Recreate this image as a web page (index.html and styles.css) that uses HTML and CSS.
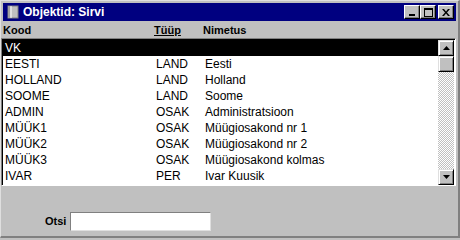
FILE: index.html
```html
<!DOCTYPE html>
<html>
<head>
<meta charset="utf-8">
<link rel="stylesheet" href="styles.css">
</head>
<body>
<div class="window">
  <div class="titlebar">
    <span class="ticon">
      <svg width="14" height="14" viewBox="0 0 14 14"><rect x="2" y="1" width="10" height="12" fill="#c0c0c0" stroke="#808080"/><rect x="2" y="1" width="2" height="12" fill="#a0a0a0"/><line x1="5" y1="1" x2="5" y2="13" stroke="#fff"/></svg>
    </span>
    <span class="ttext">Objektid: Sirvi</span>
    <span class="tbtns">
      <span class="tbtn"><svg width="8" height="7" viewBox="0 0 8 7"><rect x="1" y="5" width="6" height="2" fill="#000"/></svg></span>
      <span class="tbtn"><svg width="9" height="9" viewBox="0 0 9 9"><rect x="0.5" y="0.5" width="8" height="8" fill="none" stroke="#000"/><rect x="0" y="0" width="9" height="2" fill="#000"/></svg></span>
      <span class="tbtn close"><svg width="8" height="7" viewBox="0 0 8 7"><path d="M0 0h2l2 2.5 2-2.5h2l-3 3.5 3 3.5h-2l-2-2.5-2 2.5h-2l3-3.5z" fill="#000"/></svg></span>
    </span>
  </div>
  <div class="header">
    <span class="c1">Kood</span>
    <span class="c2"><u>Tüüp</u></span>
    <span class="c3">Nimetus</span>
  </div>
  <div class="list">
    <div class="rows">
      <div class="row sel"><span class="c1">VK</span><span class="c2"></span><span class="c3"></span></div>
      <div class="row"><span class="c1">EESTI</span><span class="c2">LAND</span><span class="c3">Eesti</span></div>
      <div class="row"><span class="c1">HOLLAND</span><span class="c2">LAND</span><span class="c3">Holland</span></div>
      <div class="row"><span class="c1">SOOME</span><span class="c2">LAND</span><span class="c3">Soome</span></div>
      <div class="row"><span class="c1">ADMIN</span><span class="c2">OSAK</span><span class="c3">Administratsioon</span></div>
      <div class="row"><span class="c1">MÜÜK1</span><span class="c2">OSAK</span><span class="c3">Müügiosakond nr 1</span></div>
      <div class="row"><span class="c1">MÜÜK2</span><span class="c2">OSAK</span><span class="c3">Müügiosakond nr 2</span></div>
      <div class="row"><span class="c1">MÜÜK3</span><span class="c2">OSAK</span><span class="c3">Müügiosakond kolmas</span></div>
      <div class="row"><span class="c1">IVAR</span><span class="c2">PER</span><span class="c3">Ivar Kuusik</span></div>
    </div>
    <div class="scrollbar">
      <div class="sbtn"><svg width="7" height="4" viewBox="0 0 7 4"><path d="M3.5 0L7 4H0z" fill="#000"/></svg></div>
      <div class="thumb"></div>
      <div class="track"></div>
      <div class="sbtn"><svg width="7" height="4" viewBox="0 0 7 4"><path d="M0 0h7L3.5 4z" fill="#000"/></svg></div>
    </div>
  </div>
  <div class="search">
    <label class="slabel">Otsi</label>
    <div class="sinput"></div>
  </div>
</div>
</body>
</html>
```
FILE: styles.css
```css
* { box-sizing: border-box; }
html, body { margin: 0; padding: 0; background: #c0c0c0; }
body { font-family: "Liberation Sans", Arial, sans-serif; font-size: 11px; }
.window {
  width: 460px; height: 238px;
  background: #c0c0c0;
  border-left: 1px solid #dfdfdf;
  border-top: 1px solid #dfdfdf;
  border-right: 2px solid #808080;
  border-bottom: 2px solid #808080;
  display: flex; flex-direction: column;
  overflow: hidden;
}
.titlebar {
  height: 18px; margin: 2px 2px 0 2px;
  background: #000080; color: #fff;
  display: flex; align-items: center;
  padding: 0 2px 0 2px;
}
.ticon { width: 16px; height: 16px; display: flex; align-items: center; justify-content: center; margin-right: 2px; }
.ttext { font-weight: bold; font-size: 12px; flex: 1; }
.tbtns { display: flex; align-items: center; }
.tbtn {
  width: 16px; height: 14px;
  background: #c0c0c0;
  border-top: 1px solid #fff; border-left: 1px solid #fff;
  border-right: 1px solid #000; border-bottom: 1px solid #000;
  box-shadow: inset -1px -1px 0 #808080;
  display: flex; align-items: center; justify-content: center;
}
.tbtn.close { margin-left: 2px; }
.header {
  height: 17px; display: flex; align-items: center;
  font-weight: bold; padding-left: 2px;
}
.c1 { width: 151px; }
.c2 { width: 49px; }
.c3 { flex: 1; }
.list {
  margin-right: 2px;
  height: 148px;
  display: flex;
  border-top: 1px solid #808080; border-left: 1px solid #808080;
  border-right: 1px solid #fff; border-bottom: 1px solid #fff;
  box-shadow: inset 1px 1px 0 #000;
  background: #fff;
  padding: 1px 1px 0 1px;
  font-size: 12px;
}
.rows { flex: 1; }
.row { height: 16px; display: flex; align-items: center; padding-left: 2px; color: #000; }
.row.sel { background: #000; color: #fff; }
.scrollbar { width: 16px; display: flex; flex-direction: column; }
.sbtn, .thumb {
  width: 16px; height: 16px; background: #c0c0c0;
  border-top: 1px solid #dfdfdf; border-left: 1px solid #dfdfdf;
  border-right: 1px solid #000; border-bottom: 1px solid #000;
  box-shadow: inset 1px 1px 0 #fff, inset -1px -1px 0 #808080;
  display: flex; align-items: center; justify-content: center;
}
.track {
  flex: 1;
  background: repeating-conic-gradient(#c0c0c0 0 25%, #fff 0 50%) 0 0 / 2px 2px;
}
.search {
  flex: 1; display: flex; align-items: center;
  padding-left: 44px; padding-top: 20px;
}
.slabel { font-weight: bold; width: 25px; }
.sinput {
  width: 141px; height: 19px; background: #fff;
  border-top: 1px solid #808080; border-left: 1px solid #808080;
  border-right: 1px solid #dfdfdf; border-bottom: 1px solid #dfdfdf;
}
```
